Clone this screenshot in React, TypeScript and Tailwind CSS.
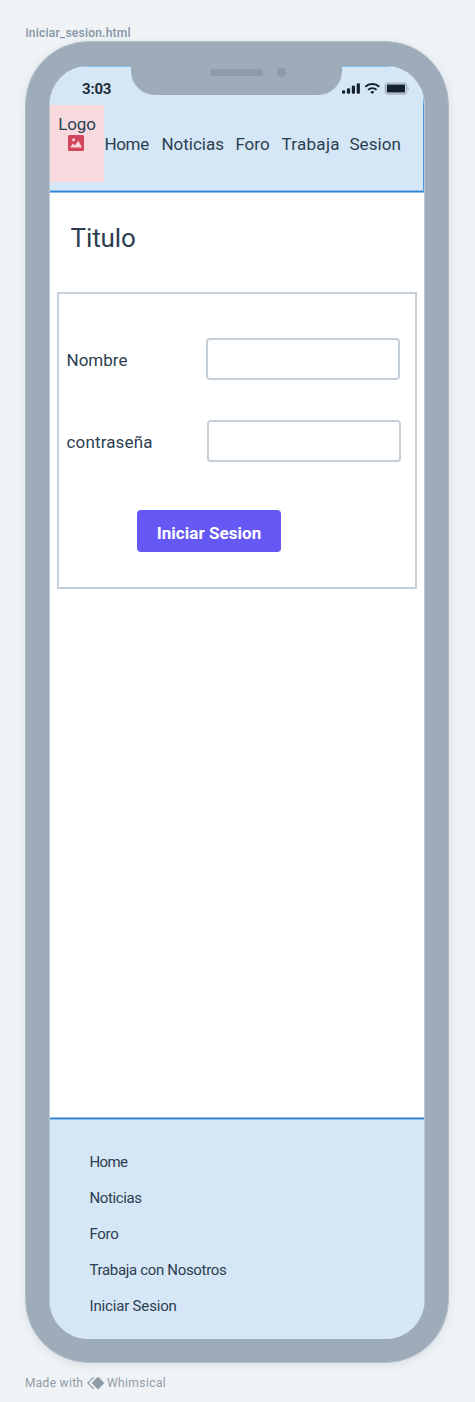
import React from "react";

const links = [
  { label: "Home", cls: "w-[57px] tracking-[-0.3px]" },
  { label: "Noticias", cls: "w-[74px]" },
  { label: "Foro", cls: "w-[46px]" },
  { label: "Trabaja", cls: "w-[68px] tracking-[0.3px]" },
  { label: "Sesion", cls: "w-[60px] tracking-[0.1px]" },
];

const footerLinks = [
  { label: "Home", cls: "tracking-[-0.6px]" },
  { label: "Noticias", cls: "tracking-[-0.4px]" },
  { label: "Foro", cls: "tracking-[-0.3px]" },
  { label: "Trabaja con Nosotros", cls: "tracking-[-0.33px]" },
  { label: "Iniciar Sesion", cls: "tracking-[-0.17px]" },
];

function Rule() {
  return <div className="h-[3px] shrink-0 border-y border-[#8dbdec] bg-[#3585d3]" />;
}

function StatusIcons() {
  return (
    <svg width="70" height="16" viewBox="0 0 70 16" className="mt-[14px] shrink-0" fill="#14202b">
      <rect x="0" y="9.2" width="3.2" height="3.6" rx="1.3" />
      <rect x="4.9" y="7.2" width="3.2" height="5.6" rx="1.3" />
      <rect x="9.8" y="4.6" width="3.2" height="8.2" rx="1.3" />
      <rect x="14.7" y="2.2" width="3.2" height="10.6" rx="1.3" />
      <g fill="none" stroke="#14202b" strokeWidth="1.9">
        <path d="M23.3 5.7a10.4 10.4 0 0 1 14 0" />
        <path d="M26 8.9a6.4 6.4 0 0 1 8.6 0" />
      </g>
      <path d="M28.3 10.9a3.2 3.2 0 0 1 4 0l-2 2.1z" />
      <rect x="43.3" y="2.2" width="21.2" height="10.8" rx="2.4" fill="none" stroke="#a3b1bd" strokeWidth="1.3" />
      <rect x="44.8" y="3.6" width="18.2" height="8" rx="0.8" />
      <path d="M65.7 5.6q2 2 0 4z" fill="#98a5b0" />
    </svg>
  );
}

export default function App() {
  return (
    <div className="flex h-[1402px] w-[475px] flex-col overflow-hidden bg-[#eff3f6] font-['Roboto',sans-serif] text-[#2c3e50]">
      <div className="h-[41px] shrink-0 pl-[25.5px] pt-[25px] text-[12px] leading-[16px] font-medium tracking-[0.22px] text-[#8495a4]">
        iniciar_sesion.html
      </div>
      <div className="ml-[25px] flex h-[1322px] w-[424px] shrink-0 flex-col rounded-[64px] border border-[#b0bdc7] bg-[#9dacb8] px-[23px] pt-[24px] pb-[23px] shadow-[0_2px_8px_rgba(60,80,100,0.12)]">
        <main className="flex flex-1 flex-col overflow-hidden rounded-[39px] border-x border-[#bdcad4] bg-white">
          <header className="flex h-[124px] shrink-0 flex-col border-r border-r-[#4a94de] bg-[#d5e6f6]">
            <div className="flex h-[39px] shrink-0">
              <div className="w-[81px] shrink-0 border-t border-[#86baec] pl-[32px] pt-[13px] text-[15px] leading-[18px] font-bold tracking-[-0.2px] text-[#1d2b38]">
                3:03
              </div>
              <div className="flex h-[29px] w-[211px] shrink-0 justify-center gap-[14px] rounded-b-[24px] bg-[#9dacb8] pt-[3px]">
                <span className="ml-[23px] h-[7px] w-[53px] rounded-full bg-[#8c9baa]" />
                <span className="mt-[-1px] h-[9px] w-[9px] rounded-full bg-[#8c9baa]" />
              </div>
              <div className="flex-1 border-t border-[#86baec]">
                <StatusIcons />
              </div>
            </div>
            <div className="flex h-[77px]">
              <div className="flex w-[54px] shrink-0 flex-col items-center bg-[#f7d9de] pt-[9px]">
                <span className="text-[17px] leading-[20px] tracking-[-0.1px]">Logo</span>
                <svg width="16" height="16" viewBox="0 0 16 16" className="mt-[1px] mr-[2px]">
                  <rect width="16" height="16" rx="1.6" fill="#d3455b" />
                  <circle cx="5.6" cy="4.8" r="1.5" fill="#f7d9de" />
                  <path d="M2 12.4 4.9 8.6l2 2L10.3 5.8 14 12.4z" fill="#f7d9de" />
                </svg>
              </div>
              <nav className="flex pt-[29px] pl-[0.4px] text-[17px] leading-[20px] whitespace-nowrap">
                {links.map((l) => (
                  <a key={l.label} className={l.cls}>{l.label}</a>
                ))}
              </nav>
            </div>
          </header>
          <Rule />
          <h1 className="mt-[29px] ml-[20.5px] text-[26px] leading-[32px] tracking-[-0.1px]">Titulo</h1>
          <form className="mt-[38px] ml-[7px] h-[297px] w-[360px] shrink-0 border-2 border-[#c5d0da] pt-[44px] pl-[7px] text-[17px]">
            <label className="flex h-[42px] items-center">
              <span className="w-[140px] pt-[3px] pl-[0.5px]">Nombre</span>
              <input className="h-[42px] w-[194px] rounded-[4px] border-2 border-[#c5d0da] bg-white" />
            </label>
            <label className="mt-[40px] flex h-[42px] items-center">
              <span className="w-[141px] pt-[3px] pl-[0.5px] tracking-[0.15px]">contraseña</span>
              <input className="h-[42px] w-[194px] rounded-[4px] border-2 border-[#c5d0da] bg-white" />
            </label>
            <button type="button" className="mt-[48px] ml-[71px] h-[42px] w-[144px] rounded-[4px] bg-[#6558f5] pt-[5px] text-[17px] font-bold tracking-[0.05px] text-white">
              Iniciar Sesion
            </button>
          </form>
          <footer className="mt-auto flex h-[222px] shrink-0 flex-col bg-[#d5e6f6]">
            <Rule />
            <ul className="pt-[24px] pl-[39.5px] text-[15px] leading-[36px]">
              {footerLinks.map((l) => (
                <li key={l.label} className={l.cls}>{l.label}</li>
              ))}
            </ul>
          </footer>
        </main>
      </div>
      <div className="flex items-center pt-[12px] pl-[25px] text-[12px] leading-[16px] text-[#8f9ca7]">
        <span className="w-[62px] tracking-[0.3px]">Made with</span>
        <svg width="18" height="14" viewBox="0 0 18 14" className="mr-[2px]">
          <path d="M7.2 2 5.8 1.8.9 7l4.9 5.2 1.4-.2" fill="none" stroke="#8f9ca7" strokeWidth="1.2" />
          <path d="M9.9 1.6q1.1-1.1 2.2 0L17.3 7l-5.2 5.4q-1.1 1.1-2.2 0L4.7 7z" fill="#8f9ca7" />
        </svg>
        <span className="tracking-[0.4px]">Whimsical</span>
      </div>
    </div>
  );
}
